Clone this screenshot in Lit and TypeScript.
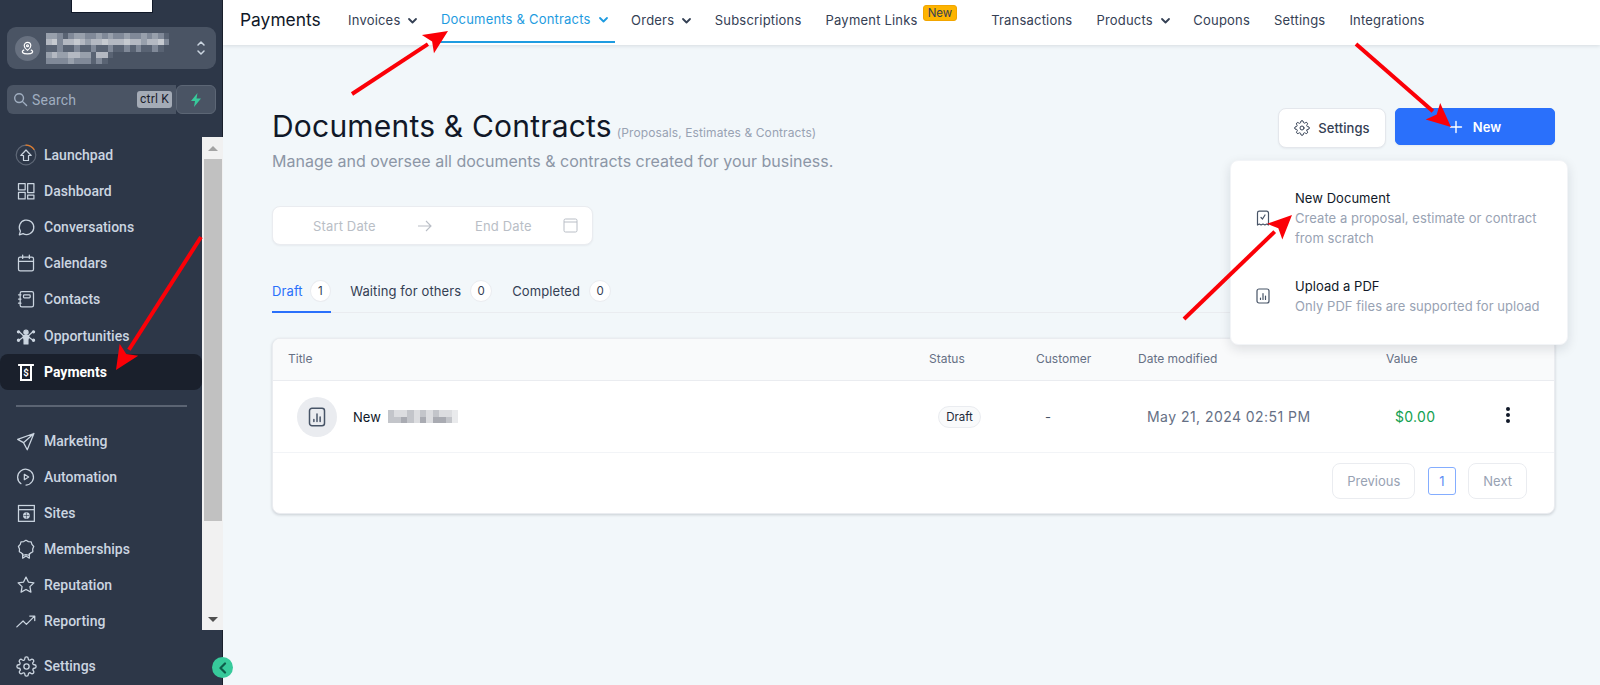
import { LitElement, html, css, svg } from "lit";
import { customElement } from "lit/decorators.js";

const ic = (body: unknown, size = 20) => html`<svg width=${size} height=${size} viewBox="0 0 24 24" fill="none" stroke="currentColor" stroke-width="1.5" stroke-linecap="round" stroke-linejoin="round">${body}</svg>`;

const gearPath = svg`<circle cx="12" cy="12" r="3"/><path d="M19.400 15a1.650 1.650 0 0 0 .33 1.820l.06.06a2 2 0 1 1-2.830 2.830l-.06-.06a1.650 1.650 0 0 0-2.800 1.170V21a2 2 0 0 1-4 0v-.09A1.650 1.650 0 0 0 7.300 19.700l-.06.06a2 2 0 1 1-2.830-2.830l.06-.06A1.650 1.650 0 0 0 3.300 14H3a2 2 0 0 1 0-4h.09A1.650 1.650 0 0 0 4.300 7.300l-.06-.06A2 2 0 1 1 7.070 4.400l.06.06A1.650 1.650 0 0 0 10 3.300V3a2 2 0 0 1 4 0v.09a1.650 1.650 0 0 0 2.800 1.170l.06-.06a2 2 0 1 1 2.830 2.830l-.06.06A1.650 1.650 0 0 0 20.700 10H21a2 2 0 0 1 0 4h-.09a1.650 1.650 0 0 0-1.510 1z"/>`;

const icons: Record<string, unknown> = {
  launchpad: html`<svg width="22" height="22" viewBox="0 0 22 22" fill="none" stroke-linecap="round"><circle cx="11" cy="11" r="9.800" stroke="#5f6877" stroke-width="1.200"/><path d="M11 1.200a9.800 9.800 0 0 1 8 4.200" stroke="#e07b2c" stroke-width="1.300"/><path d="M8.500 16.500v-5H5.800L11 6l5.200 5.500h-2.700v5z" stroke="#cbd5e0" stroke-width="1.200" stroke-linejoin="round"/></svg>`,
  dashboard: ic(svg`<rect x="3" y="3" width="8" height="7.500"/><rect x="3" y="13.500" width="8" height="8"/><rect x="14" y="3" width="7.500" height="11"/><rect x="14" y="17" width="7.500" height="4.500"/>`),
  chat: ic(svg`<path d="M4 21.500l1.300-4.500A8.700 8.700 0 1 1 8.500 20z"/>`),
  calendar: ic(svg`<rect x="3" y="5" width="18" height="16.500" rx="2"/><path d="M3 10h18M8 2.500V6.500M16 2.500V6.500"/>`),
  contacts: ic(svg`<rect x="5" y="3" width="16" height="18.500" rx="2"/><rect x="9" y="7" width="8" height="3.500" rx="1"/><path d="M3 7h3M3 12h3M3 17h3"/>`),
  opp: ic(svg`<circle cx="12" cy="7.500" r="2.500" fill="currentColor"/><path d="M8.500 11.500h7l-1.200 5v5h-4.600v-5z" fill="currentColor"/><circle cx="3" cy="7" r="1.300" fill="currentColor"/><circle cx="21" cy="7" r="1.300" fill="currentColor"/><circle cx="3" cy="17" r="1.300" fill="currentColor"/><circle cx="21" cy="17" r="1.300" fill="currentColor"/><path d="M4.500 7.500l4 3.500M19.500 7.500l-4 3.500M4.500 16.500l4-3M19.500 16.500l-4-3"/>`),
  payments: html`<svg width="20" height="20" viewBox="0 0 24 24" fill="none" stroke="currentColor" stroke-width="2.400"><path d="M2.500 3.500h19M6 3.500v18h12v-18"/><text x="12" y="17" text-anchor="middle" font-size="11.500" font-weight="700" font-family="Roboto, sans-serif" fill="currentColor" stroke="none">$</text></svg>`,
  send: ic(svg`<path d="M21.500 3L2 10l7 4 4.500 8.500zM21.500 3L9 14"/>`),
  automation: ic(svg`<path d="M6 20A9.500 9.500 0 1 1 12 21.700"/><path d="M10 8.800v6.400l5.200-3.200z"/>`),
  sites: html`<svg width="20" height="20" viewBox="0 0 24 24" fill="none" stroke="currentColor" stroke-width="1.500"><rect x="3" y="3" width="19" height="19"/><path d="M3 8h19"/><circle cx="12.500" cy="15" r="3.300" fill="currentColor"/><path d="M9 15h7M12.500 11.500v7" stroke="#2d3748" stroke-width=".7"/></svg>`,
  member: ic(svg`<path d="M12 1.500l2.900 1.600 3.300.3.900 3.100 2.200 2.500-1.300 3 .2 3.300-2.900 1.600-1.900 2.600-3.400-.7-3.400.7-1.900-2.600L4 15.300l.2-3.300-1.300-3 2.200-2.500.9-3.100 3.300-.3z"/><path d="M8 17.500V23l4-2.500 4 2.500v-5.500"/>`),
  star: ic(svg`<path d="M12 2.500l2.900 6 6.600.9-4.800 4.600 1.200 6.600L12 17.400l-5.900 3.200 1.200-6.600L2.500 9.400l6.600-.9z"/>`),
  reporting: ic(svg`<path d="M1 19l7.500-7 4 4 9.500-9.500M16.500 6H22.500v5.500"/>`),
  gear: ic(gearPath, 21),
};

const chevron = html`<svg class="chev" width="11" height="11" viewBox="0 0 11 11" fill="none" stroke="currentColor" stroke-width="1.800" stroke-linecap="round" stroke-linejoin="round"><path d="M2 4L5.500 7.500L9 4"/></svg>`;

const reportIcon = (s = 16, sw = 1.2) => html`<svg width=${s} height=${s} viewBox="0 0 16 16" fill="none" stroke="#475467" stroke-width=${sw} stroke-linecap="round"><rect x="2" y="1" width="12" height="14" rx="2"/><path d="M5.500 11.500V10M8 11.500V5.500M10.500 11.500V8"/></svg>`;

const checkDoc = html`<svg width="16" height="16" viewBox="0 0 16 16" fill="none" stroke="#475467" stroke-width="1.200" stroke-linecap="round" stroke-linejoin="round"><path d="M2.500 15V3A1.800 1.800 0 0 1 4.300 1.200h7.400A1.800 1.800 0 0 1 13.500 3v12l-1.800-1-1.800 1-1.900-1-1.900 1-1.800-1z"/><path d="M6 7.500l1.500 1.500L10 5"/></svg>`;

const blur = (rows: string[][], w: number, h: number, cell: number[]) => html`<svg width=${w} height=${h} shape-rendering="crispEdges">${rows.map((r, y) => r.map((c, x) => svg`<rect x=${x * cell[0]} y=${y * cell[1]} width=${cell[0]} height=${cell[1]} fill=${c}/>`))}</svg>`;

const a = "#b4b9c2", b = "#98a0ac", c = "#808998", d = "#596373", e = "#c6cad0", x0 = "#4a5464";
const acct = [
  [b, b, c, d, c, b, b, c, c, b, c, b, c, c, b, c, c, b, c, b, c, d],
  [a, e, c, a, a, e, a, b, a, a, e, a, a, a, e, a, a, b, a, a, e, c],
  [d, d, c, d, d, c, d, d, c, d, d, c, d, d, c, d, c, d, d, c, d, x0],
  [b, a, b, b, a, a, b, b, d, a, a, d, x0, x0, x0, x0, x0, x0, x0, x0, x0, x0],
  [c, c, c, c, b, c, c, c, d, c, d, x0, x0, x0, x0, x0, x0, x0, x0, x0, x0, x0],
];
const f = "#c3c5ca", g = "#dcdde0", h1 = "#a9abb2", w = "#e9eaec";
const docName = [
  [f, g, g, f, g, f, g, f, g, g, w],
  [f, f, h1, f, g, h1, g, h1, h1, f, w],
];

const navTop = [
  ["launchpad", "Launchpad"], ["dashboard", "Dashboard"], ["chat", "Conversations"], ["calendar", "Calendars"],
  ["contacts", "Contacts"], ["opp", "Opportunities"], ["payments", "Payments"],
];
const navBottom = [
  ["send", "Marketing"], ["automation", "Automation"], ["sites", "Sites"], ["member", "Memberships"],
  ["star", "Reputation"], ["reporting", "Reporting"],
];

const arrows: [number, number, number, number][] = [
  [352, 94, 448, 31],
  [1356, 44, 1451, 127],
  [1184, 319, 1292, 215],
  [201, 237, 116, 370],
];

@customElement("app-root")
export class AppRoot extends LitElement {
  static styles = css`
    :host { display: block; position: relative; width: 1600px; height: 685px; overflow: hidden; font-family: Inter, "Liberation Sans", sans-serif; background: #f2f7fa; color: #101828; }
    * { box-sizing: border-box; }
    .app { display: flex; height: 685px; }
    .side { width: 223px; flex: none; background: #2d3748; border-right: 1px solid #1a202c; display: flex; flex-direction: column; font-family: Roboto, "Liberation Sans", sans-serif; position: relative; }
    .logo { width: 82px; height: 13px; background: #fff; border: 1px solid #101828; border-top: 0; margin-left: 71px; flex: none; }
    .loc { margin: 14px 6px 0 7px; height: 42px; border-radius: 9px; background: #4a5464; display: flex; align-items: center; padding: 0 9px 0 8px; gap: 6px; flex: none; }
    .loc-ic { width: 25px; height: 25px; border-radius: 50%; background: #687180; display: flex; align-items: center; justify-content: center; color: #fff; flex: none; }
    .loc-txt { flex: 1; display: flex; }
    .updown { color: #cbd5e0; display: flex; }
    .searchrow { display: flex; margin: 16px 6px 0 7px; height: 29px; flex: none; }
    .search { flex: 1; display: flex; align-items: center; background: #4a5464; border-radius: 6px 0 0 6px; padding: 0 4px 0 6px; gap: 4px; color: #a0aec0; font-size: 14px; }
    .search span.t { flex: 1; letter-spacing: .2px; }
    .kbd { background: #a4abb6; color: #1a202c; border-radius: 3px; padding: 0 3px; line-height: 17px; letter-spacing: .2px; font-size: 12px; white-space: nowrap; }
    .bolt { width: 40px; background: #4a5464; border: 1px solid #5c6675; border-radius: 6px; display: flex; align-items: center; justify-content: center; }
    .navwrap { display: flex; height: 493px; margin-top: 23px; flex: none; }
    .nav { flex: 1; min-width: 0; }
    .item { height: 36.100px; display: flex; align-items: center; padding-left: 15px; gap: 7px; color: #cbd5e0; font-size: 14px; font-weight: 500; }
    .item .i { width: 22px; display: flex; justify-content: center; flex: none; }
    .item.sel { background: #1a202c; color: #fff; border-radius: 8px; font-weight: 700; }
    .hr { height: 2px; background: #5b6473; margin: 15.500px 15px 15.500px 16px; }
    .sb { width: 21px; flex: none; margin-right: -1px; background: #f1f1f1; display: flex; flex-direction: column; position: relative; }
    .sb .up, .sb .down { height: 22px; display: flex; align-items: center; justify-content: center; flex: none; }
    .sb .thumb { height: 362px; background: #c1c1c1; margin: 0 1px 0 2px; }
    .sb .rest { flex: 1; }
    .tri-up { width: 0; height: 0; border: 5px solid transparent; border-top: 0; border-bottom: 5px solid #a3a3a3; }
    .tri-down { width: 0; height: 0; border: 5px solid transparent; border-bottom: 0; border-top: 5px solid #505050; }
    .settings-item { margin-top: 18px; }
    .collapse { position: absolute; left: 212px; top: 657px; width: 21px; height: 21px; border-radius: 50%; background: #37ca9b; display: flex; align-items: center; justify-content: center; z-index: 3; }
    .main { flex: 1; min-width: 0; display: flex; flex-direction: column; }
    .top { height: 45px; background: #fff; box-shadow: 0 1px 4px rgba(16, 24, 40, .12); display: flex; padding-left: 17px; flex: none; align-items: flex-start; }
    .top h2 { margin: 0; font-size: 17.400px; font-weight: 400; line-height: 39px; color: #101828; width: 96px; white-space: nowrap; }
    .tabs { display: flex; font-size: 13px; color: #344054; letter-spacing: .2px; }
    .tab { display: flex; align-items: center; gap: 7px; padding: 0 12px; height: 40px; white-space: nowrap; position: relative; }
    .tab.on { color: #1e9be0; padding-bottom: 2px; }
    .tab.on::after { content: ""; position: absolute; left: 8px; right: 4px; top: 41px; height: 2px; background: #1e9be0; }
    .chev { flex: none; margin-right: -1.500px; }
    .badge { position: absolute; top: 5px; left: calc(100% - 7px); height: 16px; background: #fdb400; border: 1px solid #f2a500; border-radius: 3px; color: #344054; font-size: 11.500px; line-height: 14px; padding: 0 4px; letter-spacing: 0; }
    .gap { width: 49.500px; }
    .content { padding: 0 45px 0 49px; flex: 1; position: relative; }
    .head { display: flex; justify-content: space-between; margin-top: 62px; height: 100px; }
    .head h1 { margin: 0; font-size: 30px; font-weight: 400; line-height: 38px; color: #101828; display: flex; align-items: baseline; letter-spacing: .2px; }
    .head h1 small { font-size: 12px; color: #98a2b3; margin-left: 5px; letter-spacing: .1px; }
    .sub { font-size: 16px; color: #8c96a6; margin-top: -3px; line-height: 24px; }
    .btns { display: flex; gap: 9px; align-items: flex-start; margin-top: 1px; }
    .btn { height: 40px; border-radius: 8px; border: 1px solid #e4e7ec; background: #fff; display: flex; align-items: center; justify-content: center; gap: 8px; font-size: 13px; font-weight: 500; color: #344054; width: 108px; box-shadow: 0 1px 2px rgba(16, 24, 40, .05); letter-spacing: .1px; }
    .btn.new { width: 160px; height: 37px; background: #2a70fb; border: 1px solid #2a70fb; color: #fff; gap: 10px; border-radius: 5px; font-weight: 600; }
    .date { width: 321px; height: 39px; background: #fff; border: 1px solid #eaecf0; border-radius: 8px; box-shadow: 0 1px 2px rgba(16, 24, 40, .05); display: flex; align-items: center; color: #b9bec6; font-size: 13px; letter-spacing: .15px; padding: 0 14px 0 0; margin-top: -1px; }
    .date .s { margin-left: 40px; width: 105px; }
    .date .e { margin-left: 43px; flex: 1; }
    .ttabs { display: flex; margin-top: 33px; height: 35px; border-bottom: 1px solid #eaecf0; font-size: 13px; color: #344054; letter-spacing: .1px; }
    .tt { display: flex; align-items: flex-start; gap: 9px; line-height: 26px; margin-right: 20px; height: 35px; }
    .tt.on { color: #2a70fb; border-bottom: 2px solid #2a70fb; gap: 7.500px; margin-right: 19.500px; }
    .count { width: 22px; height: 22px; border-radius: 50%; background: #fff; border: 1px solid #eaecf0; font-size: 11.500px; display: flex; align-items: center; justify-content: center; color: #344054; margin-top: 2px; }
    .on .count { width: 20.500px; }
    .card { margin-top: 25px; background: #fff; border: 1px solid #eaecf0; border-radius: 8px; box-shadow: 0 1px 3px rgba(16, 24, 40, .18); height: 176px; overflow: hidden; }
    .thead, .trow { display: grid; grid-template-columns: 641px 107px 102px 248px 1fr; align-items: center; }
    .thead { height: 42px; background: #f9fafb; border-bottom: 1px solid #eaecf0; font-size: 12px; color: #667085; padding-bottom: 2px; }
    .thead > div { padding-left: 15px; }
    .trow { height: 72px; border-bottom: 1px solid #f2f4f7; font-size: 13px; }
    .namecell { display: flex; align-items: center; padding-left: 24px; gap: 16px; color: #101828; }
    .namecell .av { width: 40px; height: 40px; border-radius: 50%; background: #eaecf0; display: flex; align-items: center; justify-content: center; }
    .nm { display: flex; align-items: center; gap: 7px; }
    .draft { margin-left: 24px; width: 43px; border: 1px solid #eaecf0; background: #f9fafb; border-radius: 11px; height: 22px; font-size: 11.500px; display: flex; align-items: center; justify-content: center; color: #1d2939; }
    .dash { padding-left: 24px; color: #475467; }
    .dt { padding-left: 24px; color: #667085; font-size: 14px; letter-spacing: .45px; white-space: nowrap; }
    .val { padding-left: 24px; color: #12a150; display: flex; align-items: center; justify-content: space-between; font-size: 14px; letter-spacing: .3px; padding-right: 44px; }
    .dots { display: flex; flex-direction: column; gap: 2px; margin-top: -4px; }
    .dots i { width: 4px; height: 4px; background: #101828; border-radius: 50%; display: block; }
    .pager { display: flex; justify-content: flex-end; padding: 10px 27px 0 0; gap: 12.500px; align-items: flex-start; font-size: 13px; color: #98a2b3; }
    .pg { height: 36px; border: 1px solid #eaecf0; border-radius: 8px; display: flex; align-items: center; justify-content: center; padding: 0 14px; }
    .pg.cur { width: 28px; height: 28px; padding: 0; margin: 4px 0 0; border-color: #84adff; border-radius: 3px; color: #5f8df5; }
    .menu { position: absolute; left: 1007px; top: 115px; width: 338px; height: 185px; background: #fff; border: 1px solid #f2f4f7; border-radius: 8px; box-shadow: 0 4px 12px rgba(16, 24, 40, .12); display: flex; flex-direction: column; padding: 27px 24px 0; gap: 28px; z-index: 2; }
    .mi { display: flex; align-items: center; gap: 24px; }
    .mi .tx { display: flex; flex-direction: column; font-size: 13px; color: #101828; line-height: 20px; letter-spacing: .05px; }
    .mi .tx span { color: #98a2b3; }
    .overlay { position: absolute; inset: 0; pointer-events: none; z-index: 5; }
  `;

  render() {
    const navItem = ([i, t]: string[]) => html`<div class="item ${t === "Payments" ? "sel" : ""}"><span class="i">${icons[i]}</span>${t}</div>`;
    return html`<div class="app">
      <aside class="side">
        <div class="logo"></div>
        <div class="loc">
          <div class="loc-ic"><svg width="15" height="15" viewBox="0 0 16 16" fill="none" stroke="currentColor" stroke-width="1.300"><path d="M8 10S4.500 7.500 4.500 5a3.500 3.500 0 0 1 7 0C11.500 7.500 8 10 8 10z"/><circle cx="8" cy="5" r="1"/><path d="M4.500 9.500C2.500 10.500 2 11.500 3 12.500c1.500 1.500 8.500 1.500 10 0 1-1 .5-2-1.500-3"/></svg></div>
          <div class="loc-txt">${blur(acct, 123, 31, [5.600, 6.200])}</div>
          <div class="updown"><svg width="12" height="18" viewBox="0 0 12 18" fill="none" stroke="currentColor" stroke-width="1.500" stroke-linecap="round" stroke-linejoin="round"><path d="M3 6l3-3 3 3M3 12l3 3 3-3"/></svg></div>
        </div>
        <div class="searchrow">
          <div class="search">
            <svg width="15" height="15" viewBox="0 0 16 16" fill="none" stroke="currentColor" stroke-width="1.500" stroke-linecap="round"><circle cx="6.500" cy="6.500" r="4.700"/><path d="M10 10l4.500 4.500"/></svg>
            <span class="t">Search</span><span class="kbd">ctrl K</span>
          </div>
          <div class="bolt"><svg width="12" height="14" viewBox="0 0 12 14"><path d="M7.500 0L1 8h4l-1 6 7-8.500H6.500z" fill="#37ca9b"/></svg></div>
        </div>
        <div class="navwrap">
          <div class="nav">
            ${navTop.map(navItem)}
            <div class="hr"></div>
            ${navBottom.map(navItem)}
          </div>
          <div class="sb">
            <div class="up"><div class="tri-up"></div></div>
            <div class="thumb"></div>
            <div class="rest"></div>
            <div class="down"><div class="tri-down"></div></div>
          </div>
        </div>
        <div class="item settings-item"><span class="i">${icons.gear}</span>Settings</div>
        <div class="collapse"><svg width="10" height="12" viewBox="0 0 10 12" fill="none" stroke="#0e5c4a" stroke-width="2.200" stroke-linecap="round" stroke-linejoin="round"><path d="M7 1.500L2.500 6 7 10.500"/></svg></div>
      </aside>
      <div class="main">
        <header class="top">
          <h2>Payments</h2>
          <nav class="tabs">
            <div class="tab">Invoices ${chevron}</div>
            <div class="tab on">Documents &amp; Contracts ${chevron}</div>
            <div class="tab">Orders ${chevron}</div>
            <div class="tab">Subscriptions</div>
            <div class="tab">Payment Links<span class="badge">New</span></div>
            <div class="gap"></div>
            <div class="tab">Transactions</div>
            <div class="tab">Products ${chevron}</div>
            <div class="tab">Coupons</div>
            <div class="tab">Settings</div>
            <div class="tab">Integrations</div>
          </nav>
        </header>
        <section class="content">
          <div class="head">
            <div>
              <h1>Documents &amp; Contracts<small>(Proposals, Estimates &amp; Contracts)</small></h1>
              <div class="sub">Manage and oversee all documents &amp; contracts created for your business.</div>
            </div>
            <div class="btns">
              <div class="btn">${ic(gearPath, 16)}Settings</div>
              <div class="btn new"><svg width="14" height="14" viewBox="0 0 14 14" stroke="#fff" stroke-width="1.400" stroke-linecap="round"><path d="M7 1.500v11M1.500 7h11"/></svg>New</div>
            </div>
          </div>
          <div class="date">
            <span class="s">Start Date</span>
            <svg width="14" height="12" viewBox="0 0 14 12" fill="none" stroke="currentColor" stroke-width="1.100"><path d="M0 6h13M8 1l5 5-5 5"/></svg>
            <span class="e">End Date</span>
            <svg width="15" height="15" viewBox="0 0 15 15" fill="none" stroke="currentColor" stroke-width="1"><rect x="1" y="1" width="13" height="13" rx="1.500"/><path d="M1 4h13"/></svg>
          </div>
          <div class="ttabs">
            <div class="tt on">Draft <span class="count">1</span></div>
            <div class="tt">Waiting for others <span class="count">0</span></div>
            <div class="tt">Completed <span class="count">0</span></div>
          </div>
          <div class="card">
            <div class="thead"><div>Title</div><div>Status</div><div>Customer</div><div>Date modified</div><div>Value</div></div>
            <div class="trow">
              <div class="namecell"><div class="av">${reportIcon(20)}</div><div class="nm">New ${blur(docName, 70, 13, [6.400, 6.500])}</div></div>
              <div><div class="draft">Draft</div></div>
              <div class="dash">-</div>
              <div class="dt">May 21, 2024 02:51 PM</div>
              <div class="val">$0.00<span class="dots"><i></i><i></i><i></i></span></div>
            </div>
            <div class="pager"><div class="pg">Previous</div><div class="pg cur">1</div><div class="pg">Next</div></div>
          </div>
          <div class="menu">
            <div class="mi">${checkDoc}<div class="tx">New Document<span>Create a proposal, estimate or contract<br />from scratch</span></div></div>
            <div class="mi">${reportIcon()}<div class="tx">Upload a PDF<span>Only PDF files are supported for upload</span></div></div>
          </div>
        </section>
      </div>
    </div>
    <svg class="overlay" width="1600" height="685">
      ${arrows.map(([x1, y1, x2, y2]) => {
        const len = Math.hypot(x2 - x1, y2 - y1), ux = (x2 - x1) / len, uy = (y2 - y1) / len;
        const bx = x2 - ux * 24, by = y2 - uy * 24, px = -uy * 11, py = ux * 11;
        return svg`<line x1=${x1} y1=${y1} x2=${bx} y2=${by} stroke="#fb0007" stroke-width="4"/><polygon points="${x2},${y2} ${bx + px},${by + py} ${bx + ux * 5},${by + uy * 5} ${bx - px},${by - py}" fill="#fb0007"/>`;
      })}
    </svg>`;
  }
}
